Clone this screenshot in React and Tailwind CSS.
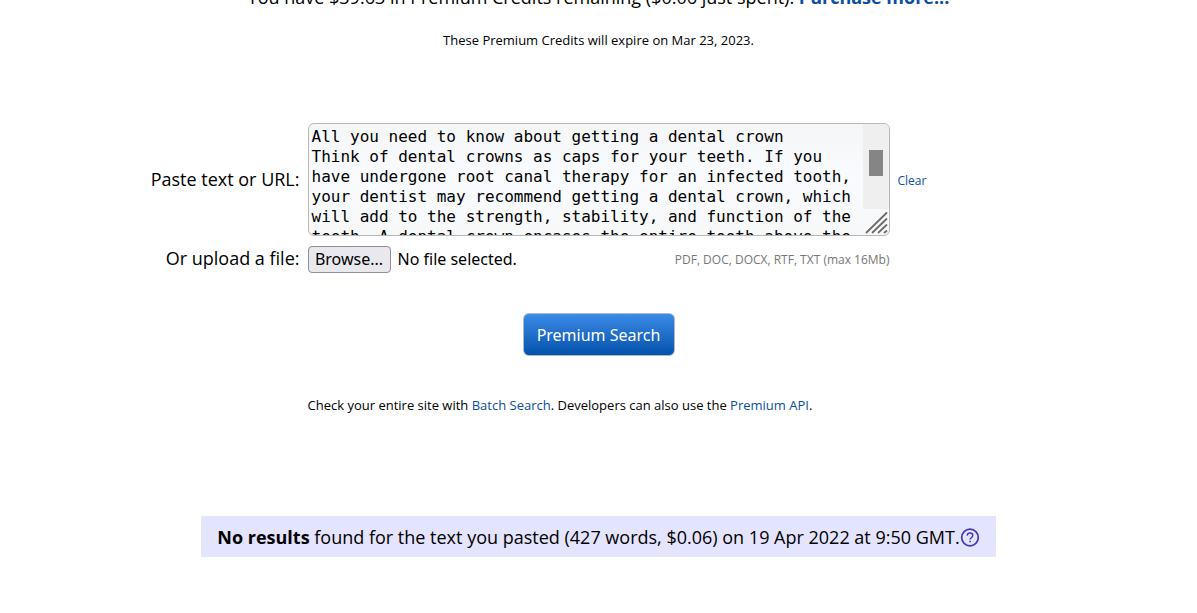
import React, { useRef, useState } from 'react';

const SAMPLE_TEXT = `All you need to know about getting a dental crown
Think of dental crowns as caps for your teeth. If you
have undergone root canal therapy for an infected tooth,
your dentist may recommend getting a dental crown, which
will add to the strength, stability, and function of the
teeth. A dental crown encases the entire tooth above the
gum line.`;

const HelpIcon = () => (
  <svg viewBox="0 0 20 20" className="w-5 h-5" fill="none" stroke="#4338b8" aria-hidden="true">
    <circle cx="10" cy="9.5" r="8.3" strokeWidth="1.7" />
    <path d="M7.2 7.6C7.3 5.9 8.5 5 10 5s2.8.9 2.8 2.4c0 1.1-.7 1.7-1.5 2.3-.8.6-1.2 1-1.2 1.9" strokeWidth="1.4" />
    <path d="M10.1 12.7v1.6" strokeWidth="1.6" />
  </svg>
);

const ResizeGrip = () => (
  <svg viewBox="0 0 24 24" className="w-6 h-6" stroke="#6b6b6b" strokeWidth="1.8" strokeLinecap="round" aria-hidden="true">
    <path d="M1.5 21.5 21.5 2M7.5 21.5l14-13.5M13.5 21.5l8-7.5M19.5 21.5l2-1.5" />
  </svg>
);

const App = () => {
  const fileRef = useRef(null);
  const [text, setText] = useState(SAMPLE_TEXT);
  const [fileName, setFileName] = useState('');

  const handleClear = (e) => {
    e.preventDefault();
    setText('');
  };

  return (
    <main className="overflow-hidden bg-white pb-14 text-black font-['Open_Sans',sans-serif]">
      <p className="-mt-[17px] text-center text-lg leading-7">
        You have $39.63 in Premium Credits remaining ($0.06 just spent).{' '}
        <a href="#purchase" className="font-bold text-[#0b4ea2]">Purchase more...</a>
      </p>
      <p className="mt-[17px] text-center text-[13px] leading-6">
        These Premium Credits will expire on Mar 23, 2023.
      </p>

      <form onSubmit={(e) => e.preventDefault()} className="mt-[71px]">
        <div className="grid grid-cols-[1fr_582px_1fr] items-center gap-x-2 gap-y-2">
          <label htmlFor="query" className="pb-0.5 text-right text-lg leading-6">Paste text or URL:</label>
          <div className="relative flex h-[113px] overflow-hidden rounded-md border border-[#b8b8b8] bg-linear-to-b from-[#f5f6f6] via-[#f9fbff] to-[#f7f8f8]">
            <textarea
              id="query"
              value={text}
              onChange={(e) => setText(e.target.value)}
              className="h-full w-full resize-none overflow-hidden bg-transparent pt-[3px] pl-[3px] pr-6 text-base leading-5 outline-none font-['DejaVu_Sans_Mono',monospace]"
            />
            {/* Scrollbar */}
            <div className="absolute top-0 right-0 h-[85px] w-[26px] bg-[#efefef]">
              <div className="mx-1.5 mt-[26px] h-[26px] bg-[#858585]" />
            </div>
            <div className="absolute right-0 bottom-0">
              <ResizeGrip />
            </div>
          </div>
          <a href="#clear" onClick={handleClear} className="pt-0.5 text-xs leading-5 text-[#0b4ea2]">Clear</a>

          <label htmlFor="upload" className="pb-0.5 text-right text-lg leading-7">Or upload a file:</label>
          <div className="flex items-center">
            <input
              id="upload"
              ref={fileRef}
              type="file"
              className="sr-only"
              onChange={(e) => setFileName(e.target.files[0]?.name || '')}
            />
            <button
              type="button"
              onClick={() => fileRef.current.click()}
              className="h-[27px] w-[83px] rounded border border-[#8f8f9d] bg-[#e9e9ed] text-base leading-6 font-['Noto_Sans',sans-serif]"
            >
              Browse...
            </button>
            <span className="ml-[7px] text-base leading-6 font-['Noto_Sans',sans-serif]">
              {fileName || 'No file selected.'}
            </span>
            <span className="ml-auto pt-0.5 text-xs leading-6 text-[#777777]">PDF, DOC, DOCX, RTF, TXT (max 16Mb)</span>
          </div>
        </div>

        <div className="mt-[39px] text-center">
          <button
            type="submit"
            className="h-[43px] w-[152px] rounded-md border border-[#b0b8c4] bg-linear-to-b from-[#3b8be8] to-[#0052ab] text-base text-white font-['Noto_Sans',sans-serif]"
          >
            Premium Search
          </button>
        </div>
      </form>

      <div className="mt-[37px] grid grid-cols-[1fr_582px_1fr] gap-x-2 text-[13px] leading-6">
        <p className="col-start-2">
          Check your entire site with <a href="#batch" className="text-[#0b4ea2]">Batch Search</a>. Developers can also use the{' '}
          <a href="#api" className="text-[#0b4ea2]">Premium API</a>.
        </p>
      </div>

      <div className="mx-auto mt-[99px] flex w-fit items-center bg-[#e5e4ff] px-4 pt-[9px] pb-[7px] text-lg leading-[25px]">
        <p>
          <strong className="font-bold">No results</strong> found for the text you pasted (427 words, $0.06) on 19 Apr 2022 at 9:50 GMT.
        </p>
        <a href="#help" aria-label="Help"><HelpIcon /></a>
      </div>
    </main>
  );
};

export default App;
